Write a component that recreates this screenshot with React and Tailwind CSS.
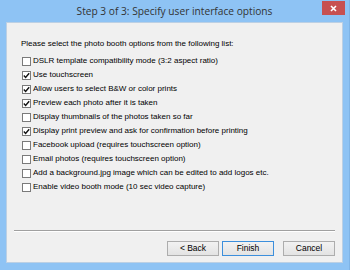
import React from "react";

const options = [
  { label: "DSLR template compatibility mode (3:2 aspect ratio)", checked: false },
  { label: "Use touchscreen", checked: true },
  { label: "Allow users to select B&W or color prints", checked: true },
  { label: "Preview each photo after it is taken", checked: true },
  { label: "Display thumbnails of the photos taken so far", checked: false },
  { label: "Display print preview and ask for confirmation before printing", checked: true },
  { label: "Facebook upload (requires touchscreen option)", checked: false },
  { label: "Email photos (requires touchscreen option)", checked: false },
  { label: "Add a background.jpg image which can be edited to add logos etc.", checked: false },
  { label: "Enable video booth mode (10 sec video capture)", checked: false },
];

const Checkbox = ({ checked }) => (
  <span className="w-[9px] h-[9px] border border-[#7a7a7a] bg-white flex items-center justify-center shrink-0">
    {checked && (
      <svg width="7" height="7" viewBox="0 0 7 7">
        <path d="M0.8 3.6 L2.6 5.4 L6.2 1.2" fill="none" stroke="#111" strokeWidth="1.4" />
      </svg>
    )}
  </span>
);

const Button = ({ children, primary }) => (
  <button
    className={`h-[15px] w-[52px] text-[8.5px] text-black flex items-center justify-center bg-gradient-to-b from-[#f2f2f2] to-[#e3e3e3] border ${
      primary ? "border-[#3c8fdc]" : "border-[#adadad]"
    }`}
  >
    {children}
  </button>
);

export default function App() {
  return (
    <div
      className="w-[350px] h-[270px] bg-[#8ec3f4] flex flex-col px-[6px] pb-[7px] border-r border-[#7fb4e6]"
      style={{ fontFamily: "'Liberation Sans', Arial, sans-serif" }}
    >
      {/* Title bar */}
      <div className="relative h-[22px] flex items-center justify-center shrink-0">
        <span
          className="text-[10.2px] text-[#333] pt-[1px]"
          style={{ fontFamily: "'Open Sans', 'Liberation Sans', sans-serif" }}
        >
          Step 3 of 3: Specify user interface options
        </span>
        <div className="absolute right-[-2px] top-[1px] w-[23px] h-[14px] bg-[#c75050] flex items-center justify-center">
          <svg width="7" height="7" viewBox="0 0 7 7">
            <path d="M1 1 L6 6 M6 1 L1 6" stroke="#fff" strokeWidth="1.6" />
          </svg>
        </div>
      </div>

      {/* Content */}
      <div className="flex-1 bg-[#f0f0f0] border border-[#bcd0e4] flex flex-col">
        <div className="pl-[14px] pt-[15px]">
          <div className="h-[12px] text-[8px] text-black flex items-center">
            Please select the photo booth options from the following list:
          </div>
          <div className="mt-[4px] flex flex-col">
            {options.map((o) => (
              <div key={o.label} className="h-[14px] flex items-center gap-[2px] pl-[1px]">
                <Checkbox checked={o.checked} />
                <span className="text-[8px] text-black whitespace-nowrap">{o.label}</span>
              </div>
            ))}
          </div>
        </div>

        <div className="mt-auto mx-[7px] border-t border-[#a0a0a0] border-b border-b-white" />
        <div className="flex justify-end items-center pt-[9px] pb-[6px] pr-[7px]">
          <Button>&lt; Back</Button>
          <div className="w-[3px]" />
          <Button primary>Finish</Button>
          <div className="w-[9px]" />
          <Button>Cancel</Button>
        </div>
      </div>
    </div>
  );
}
